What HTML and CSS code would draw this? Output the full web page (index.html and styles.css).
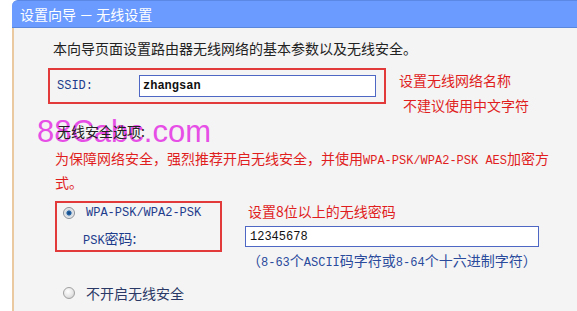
FILE: index.html
```html
<!DOCTYPE html>
<html lang="zh-CN">
<head>
    <meta charset="UTF-8">
    <title>设置向导 - 无线设置</title>
    <link rel="stylesheet" href="styles.css">
</head>
<body>
    <div class="wizard">
        <div class="title">设置向导 － 无线设置</div>
        <div class="panel">
            <div class="watermark">88Cabc.com</div>
            <p class="intro">本向导页面设置路由器无线网络的基本参数以及无线安全。</p>
            <div class="ssid-row">
                <div class="mark ssid-box">
                    <span class="label en">SSID:</span>
                    <input class="field ssid" type="text" value="zhangsan" readonly>
                </div>
                <div class="notes">
                    <p>设置无线网络名称</p>
                    <p class="indent">不建议使用中文字符</p>
                </div>
            </div>
            <p class="section">无线安全选项:</p>
            <p class="warn">为保障网络安全，强烈推荐开启无线安全，并使用<span class="en">WPA-PSK/WPA2-PSK AES</span>加密方式。</p>
            <div class="psk-row">
                <div class="mark psk-box">
                    <div class="opt"><span class="radio on"></span><span class="en">WPA-PSK/WPA2-PSK</span></div>
                    <div class="psk-label"><span class="en">PSK</span>密码:</div>
                </div>
                <div class="psk-right">
                    <p class="tip">设置8位以上的无线密码</p>
                    <input class="field pwd" type="text" value="12345678" readonly>
                    <p class="hint">（<span class="en">8-63</span>个<span class="en">ASCII</span>码字符或<span class="en">8-64</span>个十六进制字符）</p>
                </div>
            </div>
            <div class="opt off-opt"><span class="radio"></span>不开启无线安全</div>
        </div>
    </div>
</body>
</html>
```

FILE: styles.css
```css
body {
    margin: 0;
    background-color: #fff;
    font-family: "Noto Sans CJK SC", sans-serif;
    font-size: 14px;
    color: #222;
}
p {
    margin: 0;
    line-height: 20px;
}
.en {
    font-family: "Liberation Mono", monospace;
    font-size: 12px;
}
.wizard {
    margin-left: 12px;
}
.title {
    height: 26px;
    line-height: 26px;
    padding-left: 8px;
    color: #fff;
    background-color: #6b9bff;
    border-top: 1px solid #5a88e4;
    border-bottom: 1px solid #5a86dc;
    border-radius: 6px 0 0 0;
    box-shadow: 0 1px 0 #b4cdf4;
}
.panel {
    position: relative;
    min-height: 283px;
    box-sizing: border-box;
    background-color: #f4f4f4;
    border-left: 2px solid #eac9a0;
    overflow: hidden;
}
.watermark {
    position: absolute;
    left: 23px;
    top: 88px;
    font-family: "Liberation Sans", Arial, sans-serif;
    font-size: 31px;
    line-height: 31px;
    color: #e53de5;
    opacity: 0.9;
}
.intro {
    padding-top: 10px;
    margin-left: 39px;
}
.ssid-row {
    display: flex;
    align-items: flex-start;
    margin: 10px 0 0 34px;
}
.mark {
    border: 2px solid #e23a3a;
    box-sizing: border-box;
}
.ssid-box {
    display: flex;
    align-items: center;
    width: 338px;
    height: 36px;
    padding-left: 7px;
}
.label {
    width: 82px;
    color: #1e3c8c;
}
.field {
    box-sizing: border-box;
    margin: 0;
    border: 1px solid #4f67c4;
    background-color: #fff;
    font-family: "Liberation Mono", monospace;
    font-size: 12px;
    color: #111;
    outline: none;
}
.ssid {
    width: 237px;
    height: 22px;
    padding: 0 3px;
    font-weight: bold;
}
.notes {
    margin-left: 13px;
    padding-top: 2px;
    color: #e01e1e;
}
.notes .indent {
    margin: 5px 0 0 4px;
}
.section {
    position: relative;
    margin: 6px 0 0 43px;
}
.warn {
    width: 500px;
    margin: 7px 0 0 41px;
    line-height: 21px;
    color: #e01e1e;
}
.psk-row {
    display: flex;
    align-items: flex-start;
    margin: 8px 0 0 41px;
}
.psk-box {
    width: 167px;
    height: 51px;
    padding-left: 6px;
}
.opt {
    display: flex;
    align-items: center;
    height: 20px;
    color: #1e3c8c;
}
.radio {
    width: 12px;
    height: 12px;
    margin-right: 11px;
    border-radius: 50%;
    border: 1px solid #a0a0a0;
    box-sizing: border-box;
    background: radial-gradient(circle at 40% 35%, #ffffff 0%, #e6e6e6 55%, #c4c4c4 100%);
}
.radio.on {
    border-color: #8a9099;
    background: radial-gradient(circle, #0f3f78 0%, #2a6cb0 32%, #c9d2dc 40%, #eeeeee 70%, #bcbcbc 100%);
}
.psk-label {
    margin: 5px 0 0 20px;
    line-height: 20px;
    color: #1e3c8c;
}
.psk-right {
    margin-left: 23px;
}
.tip {
    padding-left: 3px;
    color: #e01e1e;
}
.pwd {
    display: block;
    width: 294px;
    height: 21px;
    margin-top: 5px;
    padding: 0 4px;
}
.hint {
    margin-top: 3px;
    padding-left: 2px;
    color: #2a4a9c;
}
.off-opt {
    margin: 10px 0 0 49px;
    color: #2a3866;
}
```
